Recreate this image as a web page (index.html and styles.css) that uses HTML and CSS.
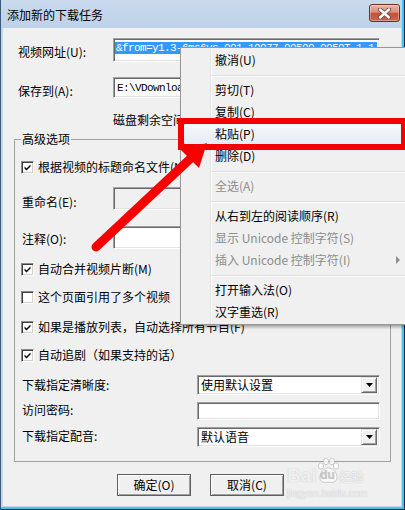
FILE: index.html
```html
<!DOCTYPE html>
<html lang="zh-CN">
<head>
<meta charset="utf-8">
<title>添加新的下载任务</title>
<link rel="stylesheet" href="styles.css">
</head>
<body>
<div class="window">
  <div class="titlebar">
    <span class="title">添加新的下载任务</span>
    <span class="close">
      <svg width="17" height="11" viewBox="0 0 17 11">
        <path d="M4 1.5 L13 9.5 M13 1.5 L4 9.5" stroke="#6a4a44" stroke-width="4.2" stroke-linecap="round"/>
        <path d="M4 1.5 L13 9.5 M13 1.5 L4 9.5" stroke="#ffffff" stroke-width="2.4" stroke-linecap="round"/>
      </svg>
    </span>
  </div>
  <div class="client">
    <div class="row row-url">
      <span class="lbl">视频网址(U):</span>
      <div class="edit url"><span class="sel">&amp;from=y1.3-6ms6vs-001.10077.00500.0050T.1.1</span></div>
    </div>
    <div class="row row-save">
      <span class="lbl">保存到(A):</span>
      <div class="edit path">E:\VDownloads\</div>
    </div>
    <div class="disk">磁盘剩余空间: 85.2 GB</div>
    <fieldset class="group">
      <legend>高级选项</legend>
      <div class="cbrow cb-first"><span class="cb on"></span><span>根据视频的标题命名文件(N)</span></div>
      <div class="row row-rename">
        <span class="glbl">重命名(E):</span>
        <div class="edit field disabled"></div>
      </div>
      <div class="row row-note">
        <span class="glbl">注释(O):</span>
        <div class="edit field"></div>
      </div>
      <div class="cbrow cb-merge"><span class="cb on"></span><span>自动合并视频片断(M)</span></div>
      <div class="cbrow cb-multi"><span class="cb"></span><span>这个页面引用了多个视频</span></div>
      <div class="cbrow cb-list"><span class="cb on"></span><span>如果是播放列表，自动选择所有节目(F)</span></div>
      <div class="cbrow cb-follow"><span class="cb on"></span><span>自动追剧（如果支持的话）</span></div>
      <div class="row row-quality">
        <span class="clbl">下载指定清晰度:</span>
        <div class="edit combo"><span class="ctext">使用默认设置</span><span class="dd"></span></div>
      </div>
      <div class="row row-pw">
        <span class="clbl">访问密码:</span>
        <div class="edit pw"></div>
      </div>
      <div class="row row-dub">
        <span class="clbl">下载指定配音:</span>
        <div class="edit combo"><span class="ctext">默认语音</span><span class="dd"></span></div>
      </div>
    </fieldset>
    <div class="buttons">
      <span class="btn">确定(O)</span>
      <span class="btn">取消(C)</span>
    </div>
  </div>

  <div class="menu">
    <div class="mi">撤消(U)</div>
    <div class="sep"></div>
    <div class="mi">剪切(T)</div>
    <div class="mi">复制(C)</div>
    <div class="mi hot">粘贴(P)</div>
    <div class="mi">删除(D)</div>
    <div class="sep"></div>
    <div class="mi dis">全选(A)</div>
    <div class="sep"></div>
    <div class="mi">从右到左的阅读顺序(R)</div>
    <div class="mi dis">显示 Unicode 控制字符(S)</div>
    <div class="mi dis">插入 Unicode 控制字符(I)<span class="subarrow"></span></div>
    <div class="sep"></div>
    <div class="mi">打开输入法(O)</div>
    <div class="mi">汉字重选(R)</div>
  </div>

  <div class="redbox"></div>
  <svg class="arrow" width="405" height="510" viewBox="0 0 405 510">
    <line x1="96" y1="247" x2="190" y2="159" stroke="#f80000" stroke-width="9" stroke-linecap="round"/>
    <polygon points="207,143 181,150 199,168" fill="#f80000"/>
  </svg>

  <div class="wm">
    <div class="wm-logo">
      <span class="wm-bai">Bai</span>
      <span class="wm-paw">
        <svg width="22" height="26" viewBox="0 0 22 26">
          <g fill="rgba(255,255,255,0.75)" stroke="rgba(150,150,150,0.45)" stroke-width="1">
            <ellipse cx="4" cy="8" rx="2.6" ry="3.2"/>
            <ellipse cx="9" cy="3.5" rx="2.6" ry="3.2"/>
            <ellipse cx="15" cy="3.5" rx="2.6" ry="3.2"/>
            <ellipse cx="19" cy="8" rx="2.6" ry="3.2"/>
            <path d="M3 20 C3 13 8 10 11 10 C15 10 20 13 20 20 C20 24 15 25 11 24 C7 25 3 24 3 20 Z"/>
          </g>
        </svg>
        <span class="wm-du">du</span>
      </span>
      <span class="wm-jy">经验</span>
    </div>
    <div class="wm-url">jingyan.baidu.com</div>
  </div>
</div>
</body>
</html>
```

FILE: styles.css
```css
html, body {
  margin: 0;
  padding: 0;
}
body {
  width: 405px;
  height: 510px;
  overflow: hidden;
  font-family: "Noto Sans CJK SC", "Liberation Sans", sans-serif;
  font-size: 12px;
  color: #000;
}
.window {
  position: relative;
  width: 405px;
  height: 510px;
  display: flex;
  flex-direction: column;
  overflow: hidden;
  background: linear-gradient(#c9daee, #bdd1e8 28px, #c4d7ec 28px);
  box-shadow: inset 1px 0 0 #3a5a80, inset -1px -1px 0 #1c2c3c, inset -3px -3px 0 #3ec8ee;
}
.titlebar {
  flex: none;
  height: 28px;
  display: flex;
  justify-content: space-between;
  align-items: flex-start;
  padding: 0 5px 0 7px;
}
.title {
  line-height: 16px;
  padding-top: 7px;
  font-size: 12px;
}
.close {
  margin-top: 4px;
  width: 31px;
  height: 18px;
  box-sizing: border-box;
  border: 1px solid #6e2c22;
  border-radius: 3px;
  background: linear-gradient(#eab5a8, #dc8c7a 45%, #c75038 52%, #c8654d);
  box-shadow: inset 0 0 0 1px rgba(255, 255, 255, 0.35);
  display: flex;
  align-items: center;
  justify-content: center;
}
.client {
  flex: 1;
  margin: 0 4px 4px 3px;
  background: #f0f0f0;
  padding-left: 15px;
  display: flex;
  flex-direction: column;
  align-items: flex-start;
}
.row {
  display: flex;
  align-items: flex-start;
}
.lbl {
  width: 95px;
  flex: none;
  line-height: 16px;
}
.edit {
  box-sizing: border-box;
  border: 1px solid;
  border-color: #a0a0a0 #ffffff #ffffff #a0a0a0;
  box-shadow: inset 1px 1px 0 #696969, inset -1px -1px 0 #e3e3e3;
  background: #fff;
}
.row-url {
  margin-top: 10px;
  height: 24px;
}
.row-url .lbl {
  padding-top: 6px;
}
.url {
  width: 267px;
  height: 24px;
  padding: 3px 2px 0 1px;
  overflow: hidden;
}
.sel {
  display: block;
  background: #3399ff;
  color: #fff;
  font-family: "Liberation Mono", monospace;
  font-size: 11px;
  letter-spacing: -0.6px;
  line-height: 12px;
  white-space: nowrap;
  overflow: hidden;
  padding-left: 1px;
}
.row-save {
  margin-top: 15px;
  height: 21px;
}
.row-save .lbl {
  padding-top: 6px;
}
.path {
  width: 267px;
  height: 21px;
  padding: 2px 3px;
  font-family: "Liberation Mono", monospace;
  font-size: 11px;
  letter-spacing: -0.6px;
  line-height: 16px;
  white-space: nowrap;
}
.disk {
  margin-top: 14px;
  margin-left: 95px;
  line-height: 16px;
}
.group {
  align-self: stretch;
  margin: 3px 10px 0 -4px;
  padding: 0 0 14px 6px;
  border: 1px solid #a0a0a0;
  min-width: 0;
}
.group legend {
  padding: 0 1px;
  line-height: 16px;
  font-size: 12px;
}
.cbrow {
  height: 18px;
  display: flex;
  align-items: center;
  gap: 4px;
  line-height: 16px;
}
.cb {
  flex: none;
  width: 13px;
  height: 13px;
  box-sizing: border-box;
  border: 1px solid;
  border-color: #8a8a8a #ffffff #ffffff #8a8a8a;
  box-shadow: inset 1px 1px 0 #404040, inset -1px -1px 0 #d4d0c8;
  background: #fff;
}
.cb.on {
  background: #fff url("data:image/svg+xml;utf8,<svg xmlns='http://www.w3.org/2000/svg' width='11' height='11' viewBox='0 0 11 11'><path d='M2.5 4.5 L4.5 6.5 L8.5 2.5 L8.5 4.5 L4.5 8.5 L2.5 6.5 Z' fill='black'/></svg>") center / 11px 11px no-repeat;
}
.cb-first { margin-top: 11px; }
.cb-merge { margin-top: 11px; }
.cb-multi { margin-top: 10px; }
.cb-list { margin-top: 12px; }
.cb-follow { margin-top: 10px; }
.glbl {
  width: 91px;
  flex: none;
  padding-left: 1px;
  line-height: 16px;
}
.field {
  width: 267px;
  height: 23px;
}
.field.disabled {
  background: #f0f0f0;
}
.row-rename {
  margin-top: 11px;
  height: 23px;
}
.row-rename .glbl {
  padding-top: 7px;
}
.row-note {
  margin-top: 16px;
  height: 23px;
}
.row-note .glbl {
  padding-top: 5px;
}
.clbl {
  width: 175px;
  flex: none;
  padding-left: 1px;
  line-height: 16px;
}
.combo {
  width: 183px;
  height: 20px;
  display: flex;
  align-items: center;
  justify-content: space-between;
  padding: 0 2px 0 3px;
}
.ctext {
  line-height: 16px;
}
.dd {
  width: 16px;
  height: 16px;
  box-sizing: border-box;
  border: 1px solid;
  border-color: #e3e3e3 #696969 #696969 #e3e3e3;
  box-shadow: inset 1px 1px 0 #fff, inset -1px -1px 0 #a0a0a0;
  background: #f0f0f0 url("data:image/svg+xml;utf8,<svg xmlns='http://www.w3.org/2000/svg' width='7' height='4' viewBox='0 0 7 4'><path d='M0 0 H7 L3.5 4 Z' fill='black'/></svg>") center / 7px 4px no-repeat;
}
.row-quality {
  margin-top: 11px;
  height: 20px;
}
.row-quality .clbl {
  padding-top: 2px;
}
.row-pw {
  margin-top: 7px;
  height: 18px;
}
.pw {
  width: 183px;
  height: 18px;
}
.row-dub {
  margin-top: 7px;
  height: 20px;
}
.row-dub .clbl {
  padding-top: 1px;
}
.buttons {
  margin-top: 12px;
  margin-left: 99px;
  display: flex;
  gap: 19px;
}
.btn {
  width: 74px;
  height: 22px;
  box-sizing: border-box;
  border: 1px solid #5e5e5e;
  box-shadow: inset 1px 1px 0 #fff, inset -1px -1px 0 #a0a0a0;
  background: #f0f0f0;
  display: flex;
  align-items: center;
  justify-content: center;
  line-height: 16px;
}

/* context menu */
.menu {
  position: absolute;
  left: 180px;
  top: 47px;
  width: 236px;
  box-sizing: border-box;
  border: 1px solid #979797;
  padding: 1px 2px;
  background: linear-gradient(to right, #f0f0f0 29px, #e2e3e3 29px, #e2e3e3 30px, #ffffff 30px, #ffffff 31px, #f0f0f0 31px);
  box-shadow: 2px 2px 3px rgba(0, 0, 0, 0.35);
}
.mi {
  height: 22px;
  box-sizing: border-box;
  display: flex;
  align-items: center;
  padding-left: 32px;
  line-height: 16px;
  font-size: 12px;
  color: #000;
}
.mi.dis {
  color: #8d8d8d;
}
.mi.hot {
  border: 1px solid #aac6ea;
  border-radius: 3px;
  padding-left: 31px;
  background: linear-gradient(#f6f8fb, #e5ecf6);
}
.subarrow {
  margin-left: auto;
  margin-right: 13px;
  width: 0;
  height: 0;
  border-left: 4px solid #8d8d8d;
  border-top: 4px solid transparent;
  border-bottom: 4px solid transparent;
}
.sep {
  height: 8px;
  box-sizing: border-box;
  margin-left: 28px;
  padding-top: 4px;
}
.sep::before {
  content: "";
  display: block;
  height: 1px;
  background: #e0e0e0;
  border-bottom: 1px solid #ffffff;
}

/* annotation overlays */
.redbox {
  position: absolute;
  left: 178px;
  top: 118px;
  width: 229px;
  height: 32px;
  box-sizing: border-box;
  border: 6px solid #f40000;
}
.arrow {
  position: absolute;
  left: 0;
  top: 0;
  pointer-events: none;
}

/* watermark */
.wm {
  position: absolute;
  left: 287px;
  top: 458px;
  color: rgba(255, 255, 255, 0.8);
  text-shadow: 0 0 1px rgba(120, 120, 120, 0.5);
}
.wm-logo {
  display: flex;
  align-items: flex-end;
  height: 28px;
}
.wm-bai {
  font-family: "Liberation Sans", sans-serif;
  font-weight: bold;
  font-size: 19px;
  line-height: 20px;
}
.wm-paw {
  display: flex;
  flex-direction: column;
  align-items: center;
  width: 22px;
  height: 28px;
}
.wm-paw svg {
  display: block;
}
.wm-du {
  margin-top: -16px;
  font-family: "Liberation Sans", sans-serif;
  font-weight: bold;
  font-size: 12px;
  line-height: 14px;
  color: rgba(200, 200, 200, 0.6);
}
.wm-jy {
  font-size: 12px;
  font-weight: bold;
  line-height: 18px;
  margin-left: 1px;
}
.wm-url {
  font-family: "Liberation Sans", sans-serif;
  font-size: 10px;
  line-height: 12px;
  margin-top: 2px;
  color: rgba(255, 255, 255, 0.75);
}
```
